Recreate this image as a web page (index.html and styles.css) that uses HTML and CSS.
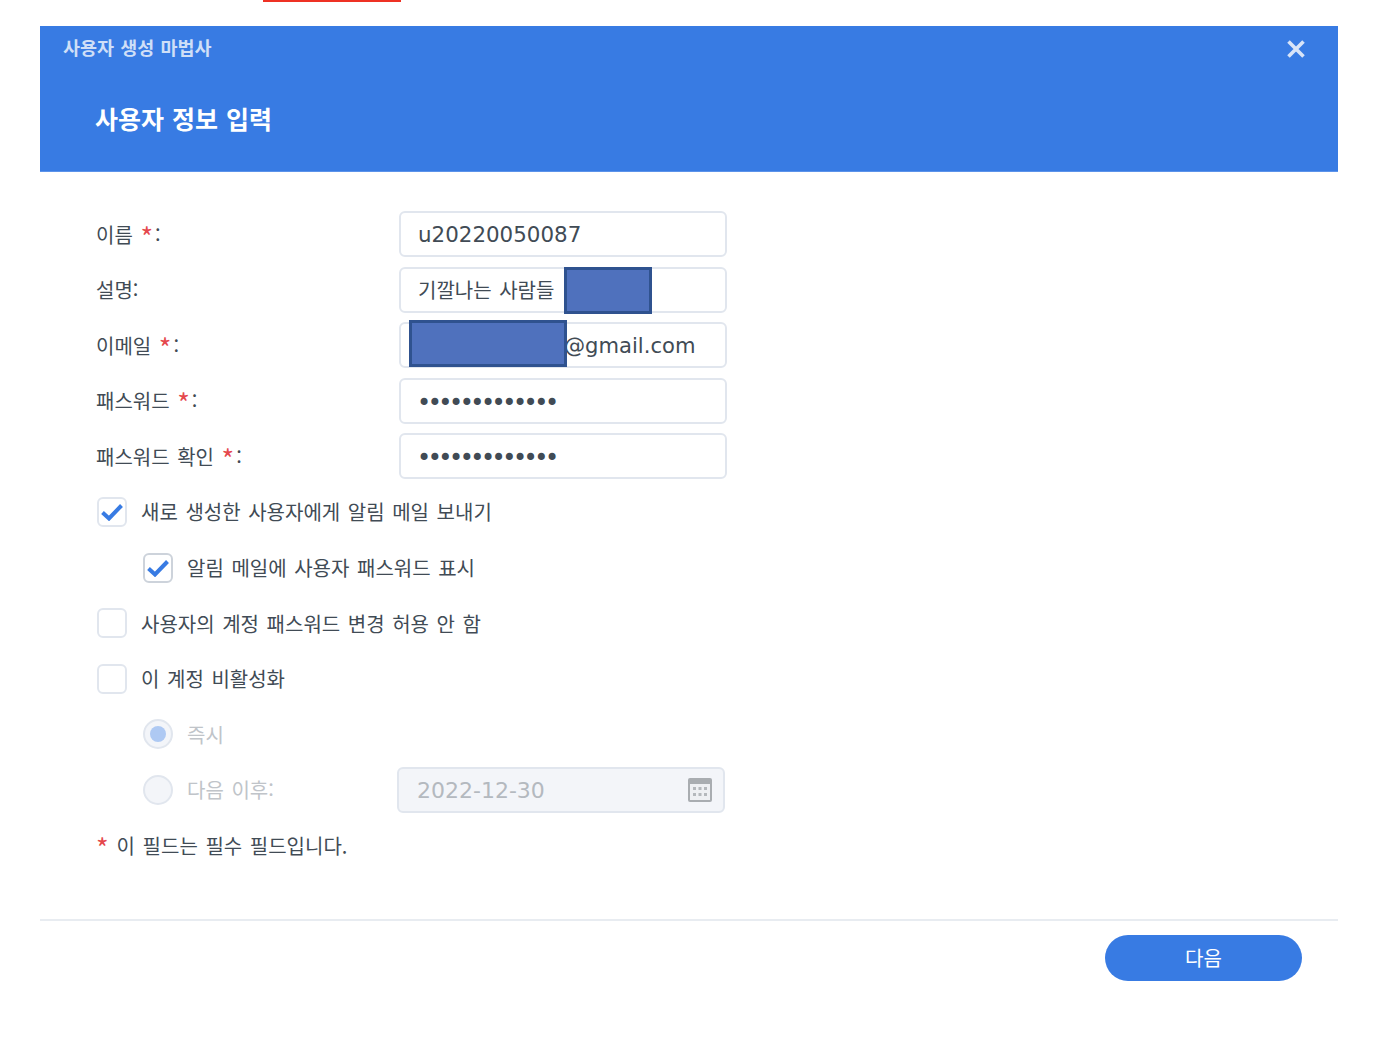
FILE: index.html
```html
<!DOCTYPE html>
<html lang="ko">
  <head>
    <meta charset="UTF-8" />
    <title>사용자 생성 마법사</title>
    <link rel="stylesheet" href="styles.css">
  </head>
  <body>
    <div class="top-mark"></div>

    <div class="wizard">
      <div class="wizard-header">
        <div class="wizard-name">사용자 생성 마법사</div>
        <svg class="close-icon" width="18" height="18" viewBox="0 0 18 18">
          <path d="M1.5 1.5 L16.5 16.5 M16.5 1.5 L1.5 16.5" />
        </svg>
        <h1>사용자 정보 입력</h1>
      </div>

      <div class="wizard-body">
        <div class="row">
          <label class="field-label">이름 <span class="req">*</span>:</label>
          <div class="field">u20220050087</div>
        </div>
        <div class="row">
          <label class="field-label">설명:</label>
          <div class="field field-ko">기깔나는 사람들<span class="redact redact-desc"></span></div>
        </div>
        <div class="row">
          <label class="field-label">이메일 <span class="req">*</span>:</label>
          <div class="field field-email">@gmail.com<span class="redact redact-mail"></span></div>
        </div>
        <div class="row">
          <label class="field-label">패스워드 <span class="req">*</span>:</label>
          <div class="field field-pass">•••••••••••••</div>
        </div>
        <div class="row">
          <label class="field-label">패스워드 확인 <span class="req">*</span>:</label>
          <div class="field field-pass">•••••••••••••</div>
        </div>

        <div class="row">
          <span class="check">
            <svg width="24" height="18" viewBox="0 0 24 18"><path d="M2.5 9.5 L9 15.5 L21.5 2.5" /></svg>
          </span>
          <span class="opt">새로 생성한 사용자에게 알림 메일 보내기</span>
        </div>
        <div class="row row-sub">
          <span class="check check-dim">
            <svg width="24" height="18" viewBox="0 0 24 18"><path d="M2.5 9.5 L9 15.5 L21.5 2.5" /></svg>
          </span>
          <span class="opt">알림 메일에 사용자 패스워드 표시</span>
        </div>
        <div class="row">
          <span class="check"></span>
          <span class="opt">사용자의 계정 패스워드 변경 허용 안 함</span>
        </div>
        <div class="row">
          <span class="check"></span>
          <span class="opt">이 계정 비활성화</span>
        </div>
        <div class="row row-sub">
          <span class="radio radio-on"></span>
          <span class="opt opt-off">즉시</span>
        </div>
        <div class="row row-sub">
          <span class="radio"></span>
          <span class="opt opt-off opt-after">다음 이후:</span>
          <div class="field field-date">
            2022-12-30
            <svg class="cal-icon" width="26" height="26" viewBox="0 0 26 26">
              <rect x="1" y="1" width="24" height="24" rx="2" fill="#a9adb1" />
              <rect x="3" y="7" width="20" height="16" fill="#eef0f3" />
              <g fill="#b4b8bc">
                <rect x="6" y="10" width="3" height="3" />
                <rect x="11.5" y="10" width="3" height="3" />
                <rect x="17" y="10" width="3" height="3" />
                <rect x="6" y="16" width="3" height="3" />
                <rect x="11.5" y="16" width="3" height="3" />
                <rect x="17" y="16" width="3" height="3" />
              </g>
            </svg>
          </div>
        </div>
        <div class="row note"><span class="req">*</span><span class="note-text">이 필드는 필수 필드입니다.</span></div>
      </div>

      <div class="wizard-footer">
        <button>다음</button>
      </div>
    </div>
  </body>
</html>
```

FILE: styles.css
```css
body {
  margin: 0;
  background-color: #ffffff;
  color: #414b55;
  font-family: "Noto Sans CJK KR", "Noto Sans", sans-serif;
  font-size: 20px;
  word-spacing: 2px;
}
.top-mark {
  width: 138px;
  height: 2px;
  margin-left: 263px;
  background-color: #ee3124;
}
.wizard {
  margin: 24px 38px 0 40px;
}
.wizard-header {
  position: relative;
  height: 146px;
  box-sizing: border-box;
  padding: 7px 23px 0;
  border-bottom: 1px solid #5c93ea;
  background-color: #387be3;
  color: #ffffff;
}
.wizard-name {
  font-size: 18.5px;
  line-height: 28px;
  font-weight: 700;
  word-spacing: 1px;
  color: #cfdff7;
}
.close-icon {
  position: absolute;
  top: 14px;
  right: 33px;
}
.close-icon path {
  stroke: #d8e4f8;
  stroke-width: 3.6;
  fill: none;
}
.wizard-header h1 {
  margin: 37px 0 0 32px;
  font-size: 25px;
  line-height: 40px;
  font-weight: 700;
  word-spacing: 1px;
}
.wizard-body {
  display: flex;
  flex-direction: column;
  gap: 9.6px;
  padding: 39px 0 0 56px;
}
.row {
  display: flex;
  align-items: center;
  height: 46px;
}
.row-sub {
  padding-left: 46px;
}
.field-label {
  width: 303px;
  flex-shrink: 0;
}
.req {
  margin: 0 2px 0 0;
  font-size: 27px;
  line-height: 20px;
  vertical-align: -5px;
  color: #e5484d;
}
.field {
  position: relative;
  width: 328px;
  height: 46px;
  box-sizing: border-box;
  padding: 0 17px;
  border: 2px solid #e1e6ee;
  border-radius: 6px;
  font-family: "DejaVu Sans", sans-serif;
  font-size: 21.4px;
  line-height: 44px;
  color: #414b55;
}
.field-ko {
  font-family: "Noto Sans CJK KR", sans-serif;
  font-size: 20px;
  line-height: 42px;
}
.field-email {
  padding-left: 163px;
  font-size: 21.1px;
}
.field-pass {
  padding-left: 16px;
  font-size: 24px;
  letter-spacing: -3.5px;
  line-height: 46px;
}
.redact {
  position: absolute;
  box-sizing: border-box;
  background-color: #4f71bd;
  border: 3px solid #2f528f;
}
.redact-desc {
  left: 163px;
  top: -2px;
  width: 88px;
  height: 47px;
}
.redact-mail {
  left: 8px;
  top: -4px;
  width: 158px;
  height: 47px;
}
.check {
  display: flex;
  align-items: center;
  justify-content: center;
  width: 30px;
  height: 30px;
  flex-shrink: 0;
  box-sizing: border-box;
  margin-left: 1px;
  border: 2px solid #e1e6ee;
  border-radius: 6px;
}
.check-dim {
  border-color: #cdd3db;
}
.check path {
  stroke: #387be3;
  stroke-width: 4;
  fill: none;
}
.opt {
  margin-left: 14px;
}
.opt-off {
  color: #c0c4c9;
}
.opt-after {
  width: 210px;
  flex-shrink: 0;
}
.radio {
  display: flex;
  align-items: center;
  justify-content: center;
  width: 30px;
  height: 30px;
  flex-shrink: 0;
  box-sizing: border-box;
  margin-left: 1px;
  border: 2px solid #e1e6ee;
  border-radius: 50%;
  background-color: #f3f5f9;
}
.radio-on::after {
  content: "";
  width: 16px;
  height: 16px;
  border-radius: 50%;
  background-color: #aec9f3;
}
.field-date {
  padding-left: 18px;
  background-color: #f3f5f9;
  font-size: 22px;
  color: #b4b9bf;
}
.cal-icon {
  position: absolute;
  right: 10px;
  top: 8px;
}
.note {
  color: #414b55;
}
.note .req {
  margin: 4px 8px 0 0;
}
.wizard-footer {
  display: flex;
  justify-content: flex-end;
  margin-top: 50px;
  padding: 14px 36px 0 0;
  border-top: 2px solid #e8ecf1;
}
button {
  width: 197px;
  height: 46px;
  border: none;
  border-radius: 23px;
  background-color: #387be3;
  color: #ffffff;
  font-family: "Noto Sans CJK KR", sans-serif;
  font-size: 20px;
}
```
